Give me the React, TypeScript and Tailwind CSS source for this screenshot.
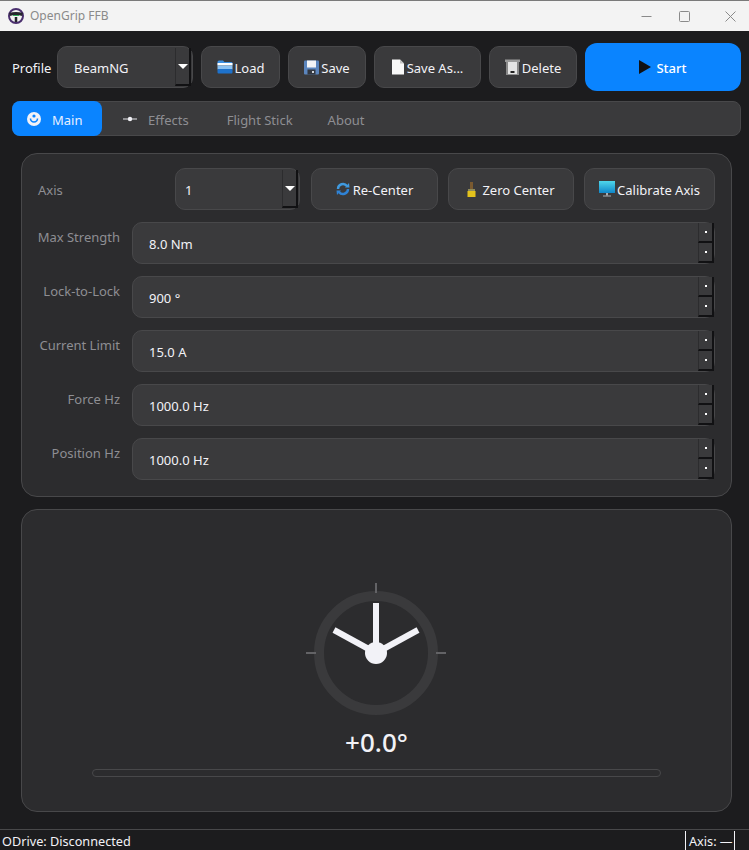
import type { ReactNode } from "react";

const FONT = "font-['Noto_Sans','Open_Sans',sans-serif]";

function FolderIcon() {
  return (
    <svg width="16" height="14" viewBox="0 0 16 14">
      <path d="M0.5 2 Q0.5 0.5 2 0.5 H6 L7.5 2 H14.5 Q15.5 2 15.5 3.5 V5 H0.5 Z" fill="#3d8fe0" />
      <rect x="0.5" y="3" width="15" height="2.5" fill="#ffffff" />
      <rect x="0.5" y="5.5" width="15" height="4" fill="#8cc2f2" />
      <rect x="0.5" y="9" width="15" height="4.5" rx="1" fill="#1e72cc" />
    </svg>
  );
}

function FloppyIcon() {
  return (
    <svg width="15" height="15" viewBox="0 0 15 15">
      <rect x="0" y="0.5" width="15" height="14" rx="1" fill="#5b85bd" />
      <rect x="3" y="0.5" width="9" height="7" fill="#f3f4f6" />
      <rect x="3.5" y="9.5" width="8" height="5" fill="#33373f" />
      <rect x="8" y="11" width="2" height="2" fill="#d1d5db" />
    </svg>
  );
}

function FileIcon() {
  return (
    <svg width="12" height="16" viewBox="0 0 12 16">
      <path d="M0 0.5 H8 L12 4.5 V15.5 H0 Z" fill="#f8f8f8" />
      <path d="M8 0.5 L12 4.5 H8 Z" fill="#c4c4c4" />
    </svg>
  );
}

function TrashIcon() {
  return (
    <svg width="15" height="16" viewBox="0 0 15 16">
      <rect x="0" y="0.5" width="15" height="2.5" fill="#9a9a9a" />
      <rect x="1" y="3" width="13" height="12.5" fill="#e4e4e4" />
      <rect x="1" y="3" width="2" height="12.5" fill="#8a8a8a" />
      <rect x="12" y="3" width="2" height="12.5" fill="#8a8a8a" />
      <rect x="5.5" y="12" width="4" height="2" fill="#222222" />
    </svg>
  );
}

function RefreshIcon() {
  return (
    <svg width="14" height="14" viewBox="0 0 14 14" fill="none">
      <path d="M2 7 A5 5 0 0 1 11 4" stroke="#3f9ae0" strokeWidth="2.4" />
      <path d="M12 7 A5 5 0 0 1 3 10" stroke="#2f83d6" strokeWidth="2.4" />
      <path d="M9 5.5 L13.5 5.5 L13 1 Z" fill="#3f9ae0" />
      <path d="M5 8.5 L0.5 8.5 L1 13 Z" fill="#2f83d6" />
    </svg>
  );
}

function BrushIcon() {
  return (
    <svg width="9" height="15" viewBox="0 0 9 15">
      <rect x="3" y="0" width="3" height="8" fill="#7a5a30" />
      <rect x="1" y="7" width="7" height="3" fill="#8f8a5a" />
      <rect x="0.5" y="9" width="8" height="6" fill="#e3c21c" />
    </svg>
  );
}

function MonitorIcon() {
  return (
    <svg width="16" height="16" viewBox="0 0 16 16">
      <defs>
        <linearGradient id="screen" x1="0" y1="0" x2="0" y2="1">
          <stop offset="0" stopColor="#4fd6ea" />
          <stop offset="1" stopColor="#0f86c9" />
        </linearGradient>
      </defs>
      <rect x="0" y="0" width="16" height="12" fill="url(#screen)" />
      <rect x="7" y="12" width="2" height="2.5" fill="#a9adb3" />
      <rect x="4" y="14.5" width="8" height="1" fill="#a9adb3" />
    </svg>
  );
}

function ComboArrow() {
  return (
    <div className="absolute top-[1px] right-[1px] bottom-[1px] w-[16px] flex items-center justify-center border-l border-l-[#2c2c2e] border-r-2 border-r-[#111113] border-b-2 border-b-[#111113]">
      <span className="w-0 h-0 border-x-[5px] border-x-transparent border-t-[5px] border-t-white" />
    </div>
  );
}

function Combo({ value, className, textClass }: { value: string; className: string; textClass: string }) {
  return (
    <div className={`relative h-[42px] flex items-center rounded-[10px] bg-[#3a3a3c] border border-[#48484a] text-[#f2f2f7] text-[13px] ${textClass} ${className}`}>
      <span className="pt-[4px]">{value}</span>
      <ComboArrow />
    </div>
  );
}

function Btn({ icon, label, className }: { icon: ReactNode; label: string; className: string }) {
  return (
    <div className={`h-[42px] flex items-center justify-center rounded-[10px] bg-[#3a3a3c] border border-[#48484a] text-[#f2f2f7] text-[13px] ${className}`}>
      {icon}
      <span className="pt-[4px]">{label}</span>
    </div>
  );
}

function SpinButton() {
  return (
    <div className="w-[16px] h-[20px] flex items-center justify-center bg-[#3a3a3c] border-l border-l-[#2c2c2e] border-r-2 border-r-[#111113] border-b-2 border-b-[#111113]">
      <span className="w-[2px] h-[2px] bg-white" />
    </div>
  );
}

function SpinRow({ label, value }: { label: string; value: string }) {
  return (
    <div className="flex gap-[12px]">
      <div className="w-[82px] pt-[6px] text-right text-[13px] whitespace-nowrap flex justify-end text-[#8e8e93]">{label}</div>
      <div className="relative flex-1 h-[42px] flex items-center pl-[16px] rounded-[10px] bg-[#3a3a3c] border border-[#48484a] text-[#f2f2f7] text-[13px]">
        <span className="pt-[4px]">{value}</span>
        <div className="absolute top-0 right-0 flex flex-col">
          <SpinButton />
          <SpinButton />
        </div>
      </div>
    </div>
  );
}

function Dial() {
  return (
    <svg className="mr-[1px]" width="150" height="150" viewBox="0 0 150 150" fill="none">
      <circle cx="75" cy="75" r="57" stroke="#3a3a3c" strokeWidth="10" />
      <line x1="75" y1="5" x2="75" y2="15" stroke="#636366" strokeWidth="2" />
      <line x1="5" y1="75" x2="15" y2="75" stroke="#636366" strokeWidth="2" />
      <line x1="135" y1="75" x2="145" y2="75" stroke="#636366" strokeWidth="2" />
      <line x1="75" y1="75" x2="75" y2="25" stroke="#f2f2f7" strokeWidth="6" />
      <line x1="75" y1="75" x2="33" y2="52" stroke="#f2f2f7" strokeWidth="6" />
      <line x1="75" y1="75" x2="117" y2="52" stroke="#f2f2f7" strokeWidth="6" />
      <circle cx="75" cy="75" r="11" fill="#f2f2f7" />
    </svg>
  );
}

export default function App() {
  return (
    <div className={`w-[749px] h-[850px] flex flex-col overflow-hidden bg-[#1c1c1e] ${FONT}`}>
      {/* title bar */}
      <div className="h-[31px] shrink-0 flex items-center bg-[#f3f3f3] border-t border-[#7a7a7a]">
        <svg className="ml-[8px]" width="16" height="16" viewBox="0 0 16 16" fill="none">
          <circle cx="8" cy="8" r="7" stroke="#4a2f6e" strokeWidth="2" />
          <path d="M1.5 6.5 Q8 4.5 14.5 6.5" stroke="#26262e" strokeWidth="3" />
          <path d="M8 9 V14" stroke="#26262e" strokeWidth="2.5" />
          <path d="M5 7.5 H11" stroke="#32b05a" strokeWidth="1" />
        </svg>
        <span className="ml-[6px] text-[12px] text-[#8a8a8a]">OpenGrip FFB</span>
        <div className="ml-auto flex items-center">
          <svg className="mr-[27px]" width="11" height="11" viewBox="0 0 11 11" stroke="#8a8a8a">
            <line x1="0.5" y1="5.5" x2="10.5" y2="5.5" />
          </svg>
          <svg className="mr-[35px]" width="11" height="11" viewBox="0 0 11 11" fill="none" stroke="#8a8a8a">
            <rect x="0.5" y="0.5" width="10" height="10" rx="1" />
          </svg>
          <svg className="mr-[13px]" width="11" height="11" viewBox="0 0 11 11" stroke="#8a8a8a">
            <line x1="0.5" y1="0.5" x2="10.5" y2="10.5" />
            <line x1="10.5" y1="0.5" x2="0.5" y2="10.5" />
          </svg>
        </div>
      </div>

      {/* toolbar */}
      <div className="mt-[12px] ml-[12px] shrink-0 flex items-center">
        <span className="w-[45px] pt-[4px] text-[13px] text-[#f2f2f7]">Profile</span>
        <Combo value="BeamNG" className="w-[136px]" textClass="pl-[16px]" />
        <Btn icon={<FolderIcon />} label="Load" className="w-[79px] ml-[8px] gap-[2px]" />
        <Btn icon={<FloppyIcon />} label="Save" className="w-[78px] ml-[8px] gap-[2px]" />
        <Btn icon={<FileIcon />} label="Save As..." className="w-[107px] ml-[8px] gap-[3px]" />
        <Btn icon={<TrashIcon />} label="Delete" className="w-[88px] ml-[8px] gap-[2px]" />
        <div className="ml-[8px] w-[156px] h-[48px] flex items-center justify-center gap-[5px] rounded-[12px] bg-[#0a84ff] text-white text-[13px] font-medium">
          <span className="w-0 h-0 border-y-[7px] border-y-transparent border-l-[12px] border-l-[#111113]" />
          <span className="pt-[4px]">Start</span>
        </div>
      </div>

      {/* tabs */}
      <div className="mt-[10px] ml-[12px] w-[729px] h-[35px] shrink-0 flex items-center rounded-[8px] bg-[#3a3a3c] border border-[#48484a] text-[13px] text-[#8e8e93]">
        <div className="-ml-px w-[90px] h-[35px] flex items-center rounded-[8px] bg-[#0a84ff] text-[#e6efff]">
          <svg className="ml-[15px]" width="14" height="14" viewBox="0 0 14 14" fill="none">
            <circle cx="7" cy="7" r="7" fill="#f2f2f7" />
            <path d="M3.5 6.5 A3.5 3.5 0 0 0 10.5 6.5" stroke="#0a84ff" strokeWidth="1.6" />
            <circle cx="7" cy="4" r="1.6" fill="#0a84ff" />
          </svg>
          <span className="ml-[11px] pt-[4px]">Main</span>
        </div>
        <svg className="ml-[21px]" width="14" height="6" viewBox="0 0 14 6">
          <rect x="0" y="2.5" width="14" height="1" fill="#e5e5ea" />
          <circle cx="7" cy="3" r="2.2" fill="#f2f2f7" />
        </svg>
        <span className="ml-[11px] pt-[4px]">Effects</span>
        <span className="ml-[38px] pt-[4px]">Flight Stick</span>
        <span className="ml-[35px] pt-[4px]">About</span>
      </div>

      {/* settings panel */}
      <div className="mt-[17px] ml-[21px] w-[711px] h-[344px] shrink-0 flex flex-col gap-[12px] pt-[14px] pl-[16px] pr-[16px] rounded-[16px] bg-[#2c2c2e] border border-[#48484a]">
        <div className="flex items-center">
          <span className="w-[137px] pt-[4px] text-[13px] text-[#8e8e93]">Axis</span>
          <Combo value="1" className="w-[125px]" textClass="pl-[9px]" />
          <Btn icon={<RefreshIcon />} label="Re-Center" className="w-[127px] ml-[11px] gap-[3px]" />
          <Btn icon={<BrushIcon />} label="Zero Center" className="w-[126px] ml-[10px] gap-[6px]" />
          <Btn icon={<MonitorIcon />} label="Calibrate Axis" className="w-[131px] ml-[10px] gap-[2px]" />
        </div>
        <SpinRow label="Max Strength" value="8.0 Nm" />
        <SpinRow label="Lock-to-Lock" value="900 °" />
        <SpinRow label="Current Limit" value="15.0 A" />
        <SpinRow label="Force Hz" value="1000.0 Hz" />
        <SpinRow label="Position Hz" value="1000.0 Hz" />
      </div>

      {/* wheel panel */}
      <div className="mt-[12px] ml-[21px] w-[711px] h-[303px] shrink-0 flex flex-col items-center pt-[68px] rounded-[16px] bg-[#2c2c2e] border border-[#48484a]">
        <Dial />
        <div className="-mt-[4px] h-[36px] leading-[36px] text-[26px] font-medium text-[#f2f2f7]">+0.0°</div>
        <div className="mt-[9px] w-[569px] h-[8px] rounded-full border border-[#48484a]" />
      </div>

      {/* status bar */}
      <div className="mt-[17px] flex-1 flex items-stretch border-t border-[#48484a] text-[12.7px] text-[#f2f2f7]">
        <span className="ml-[2px] self-center pt-[1px]">ODrive: Disconnected</span>
        <div className="ml-auto mr-[14px] mt-[1px] pt-[1px] flex items-center whitespace-nowrap border-x border-[#f2f2f7] w-[50px] pl-[3px]">Axis: —</div>
      </div>
    </div>
  );
}
